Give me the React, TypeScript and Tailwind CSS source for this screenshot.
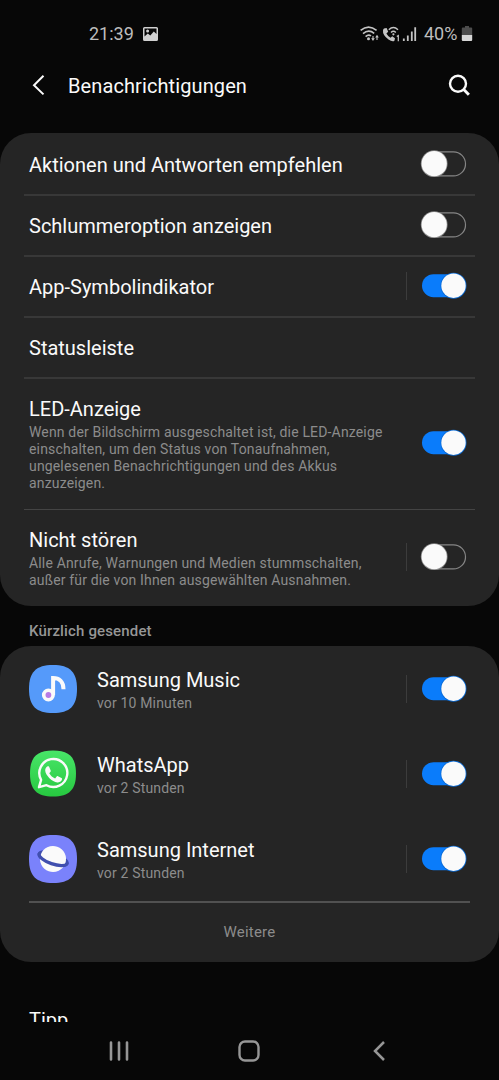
import React from "react";

function Toggle({ on, label }: { on: boolean; label: string }) {
  return (
    <button role="switch" aria-checked={on} aria-label={label} className="block h-7 w-12 shrink-0">
      <svg viewBox="0 0 48 28" className="block h-7 w-12">
        {on ? (
          <>
            <rect x="3" y="2.2" width="44" height="23" rx="11.5" fill="#0a7cfb" />
            <circle cx="34.5" cy="13.7" r="13" fill="#0a6bd6" />
            <circle cx="34.5" cy="13.7" r="12.2" fill="#fafafa" />
          </>
        ) : (
          <>
            <rect x="3.5" y="1.9" width="43" height="24" rx="12" fill="none" stroke="#858585" strokeWidth="1.2" />
            <circle cx="15.2" cy="13.7" r="13.4" fill="#8a8a8a" />
            <circle cx="15.2" cy="13.7" r="12.6" fill="#fafafa" />
          </>
        )}
      </svg>
    </button>
  );
}

function Separator() {
  return <div className="mr-3 h-7 w-px shrink-0 bg-[#3c3c3c]" />;
}

function Row({
  title,
  text,
  on,
  separated = false,
  className,
}: {
  title: string;
  text?: string[];
  on?: boolean;
  separated?: boolean;
  className: string;
}) {
  return (
    <div className={"flex items-center pr-8 pl-[29px] " + className}>
      <div className="min-w-0 flex-1 pt-0.5">
        <h2 className="text-[20px] leading-6 whitespace-nowrap text-[#fafafa]">{title}</h2>
        {text && (
          <p className="mt-[3px] text-[14px] leading-[17px] tracking-[0.16px] whitespace-nowrap text-[#8c8c8c]">
            {text.map((line) => (
              <span key={line} className="block">
                {line}
              </span>
            ))}
          </p>
        )}
      </div>
      {separated && <Separator />}
      {on !== undefined && <Toggle on={on} label={title} />}
    </div>
  );
}

function Divider() {
  return <div className="mx-6 h-0.5 bg-[#383838]" />;
}

const squircle = "M24 0C41 0 48 7 48 24S41 48 24 48 0 41 0 24 7 0 24 0Z";

function MusicIcon() {
  return (
    <svg viewBox="0 0 48 48" className="size-12">
      <path d={squircle} fill="#559afa" />
      <path d="M24.1 30V13C30 13 34.5 16.5 34.5 24.3" fill="none" stroke="#fafafa" strokeWidth="4" />
      <circle cx="19.4" cy="30" r="4.7" fill="#b77be6" stroke="#fafafa" strokeWidth="3.6" />
    </svg>
  );
}

function WhatsAppIcon() {
  return (
    <svg viewBox="0 0 48 48" className="size-12">
      <defs>
        <linearGradient id="wa" x1="0" y1="0" x2="0" y2="1">
          <stop offset="0" stopColor="#48e568" />
          <stop offset="1" stopColor="#27c840" />
        </linearGradient>
      </defs>
      <path d={squircle} transform="translate(1 .6) scale(.958)" fill="url(#wa)" />
      <path
        d="M10 37.2 12.1 29.8A14 14 0 1 1 17.5 35.2Z"
        fill="none"
        stroke="#fafafa"
        strokeWidth="2.4"
        strokeLinejoin="round"
      />
      <path
        d="M18.2 16.6c.5-.5 1.5-.6 1.9.1l1.6 3.8c.2.5.1.9-.2 1.3l-1.2 1.5c1.5 2.6 3.2 4.1 5.8 5.2l1.6-2c.3-.4.7-.5 1.2-.3l3.6 1.7c.5.3.7.6.6 1.2-.4 2.4-2.5 3.6-4.8 3.3-2.5-.4-5.6-1.9-8.1-4.5-2.2-2.3-4-4.8-4-7.3 0-1.6.7-2.9 2-4Z"
        fill="#fafafa"
      />
    </svg>
  );
}

function InternetIcon() {
  return (
    <svg viewBox="0 0 48 48" className="size-12">
      <path d={squircle} fill="#7a82fb" />
      <g transform="rotate(19 24 24)">
        <ellipse cx="24" cy="23.6" rx="14.8" ry="5" fill="none" stroke="#404fae" strokeWidth="3" />
        <circle cx="24" cy="24" r="13" fill="#fafafa" />
        <path d="M9.2 23.6C9.2 26.4 15.8 28.9 24 28.9S38.8 26.4 38.8 23.6" fill="none" stroke="#404fae" strokeWidth="3.2" strokeLinecap="round" />
      </g>
    </svg>
  );
}

function AppRow({ icon, name, time }: { icon: React.ReactNode; name: string; time: string }) {
  return (
    <div className="flex h-[85px] items-center pr-8 pl-[29px]">
      {icon}
      <div className="ml-5 min-w-0 flex-1 pt-1">
        <h3 className="text-[20px] leading-6 text-[#fafafa]">{name}</h3>
        <p className="mt-px text-[14px] leading-5 tracking-[0.16px] text-[#8c8c8c]">{time}</p>
      </div>
      <Separator />
      <Toggle on label={name} />
    </div>
  );
}

function StatusBar() {
  return (
    <div className="flex h-[66px] items-center justify-between pt-px pr-[26px] pl-[89px] text-[18px] text-[#bdbdbd]">
      <div className="flex items-center">
        <span className="w-[54px] whitespace-nowrap">21:39</span>
        <svg viewBox="0 0 15 14" className="h-3.5 w-[15px]">
          <path
            fillRule="evenodd"
            fill="#d0d0d0"
            d="M1.5 0h12Q15 0 15 1.5v11Q15 14 13.5 14h-12Q0 14 0 12.5v-11Q0 0 1.5 0ZM1.5 1.5v8L4.8 6.6 7.3 8.6 10.8 4.6 13.5 7V1.5ZM4.6 2.6a1.5 1.5 0 1 1 0 3 1.5 1.5 0 0 1 0-3Z"
          />
        </svg>
      </div>
      <div className="flex items-center">
        <svg viewBox="0 0 58 20" className="h-5 w-[58px]" fill="none" stroke="#c4c4c4">
          <path d="M.6 6.4Q8.5-.3 16.6 6.4M3 9.7Q8.6 4.8 14.2 9.4M5.6 12.6Q8.6 10 11 12" strokeWidth="1.6" />
          <circle cx="8.5" cy="14.8" r="1.5" fill="#c4c4c4" stroke="none" />
          <path d="M13 12v3M17 13v3" strokeWidth="1.1" />
          <path d="M11.2 14.2h3.6L13 17ZM15.2 13.4h3.6L17 10.8Z" fill="#c4c4c4" stroke="none" />
          <path d="M24 4.5 26.6 4 28.2 7.8 26.4 9.4Q28 12.4 30.6 13.7L32.2 12.2 35 14.2 34.4 16.8Q32.5 18.3 28.5 15.5 22.4 10.8 23 6.4 23.2 5 24 4.5Z" fill="#c4c4c4" stroke="none" />
          <path d="M28.8 5.8Q33.4 1.4 38 5.8M31 8.4Q33.4 6 35.8 8.4" strokeWidth="1.4" />
          <circle cx="33.4" cy="10.3" r="1.1" fill="#c4c4c4" stroke="none" />
          <path d="M36.8 12.6 38.3 11.6V17.2" strokeWidth="1.2" />
          <path d="M43.8 14.5V17M47.8 11.5V17M51.8 7.6V17M55.2 3.3V17" strokeWidth="1.8" />
        </svg>
        <span className="ml-[6px] w-[34px] whitespace-nowrap">40%</span>
        <svg viewBox="0 0 12 16" className="ml-[3px] h-4 w-3">
          <path d="M4 0h4v1.5h2.2q1 0 1 1V9H.8V2.5q0-1 1-1H4Z" fill="#4d4d4d" />
          <path d="M.8 9h10.4v5q0 1-1 1H1.8q-1 0-1-1Z" fill="#d6d6d6" />
        </svg>
      </div>
    </div>
  );
}

export default function App() {
  return (
    <div
      className="flex h-[1080px] w-[499px] flex-col overflow-hidden bg-[#070707]"
      style={{ fontFamily: 'Roboto, "Liberation Sans", sans-serif' }}
    >
      <StatusBar />
      <header className="flex h-10 items-center pr-7 pb-0.5 pl-8">
        <svg viewBox="0 0 14 22" className="h-[22px] w-3.5" fill="none" stroke="#fafafa" strokeWidth="2">
          <path d="M11.5 1.8 2 11.3l9.5 9.1" />
        </svg>
        <h1 className="ml-[22px] flex-1 pt-px text-[20px] leading-6 tracking-[0.1px] text-[#fafafa]">Benachrichtigungen</h1>
        <svg viewBox="0 0 24 24" className="size-6" fill="none" stroke="#fafafa" strokeWidth="2.4">
          <circle cx="11" cy="10.7" r="8" />
          <path d="m16.5 16.2 5.4 5.6" strokeWidth="2.9" />
        </svg>
      </header>

      <main className="flex h-[916px] shrink-0 flex-col overflow-hidden pt-[27px]">
        <section className="h-[473px] shrink-0 overflow-hidden rounded-[31px] bg-[#252525]">
          <Row title="Aktionen und Antworten empfehlen" on={false} className="h-[61px] pt-px" />
          <Divider />
          <Row title="Schlummeroption anzeigen" on={false} className="h-[59px] pb-px" />
          <Divider />
          <Row title="App-Symbolindikator" on separated className="h-[59px] pb-px" />
          <Divider />
          <Row title="Statusleiste" className="h-[59px] pb-px" />
          <Divider />
          <Row
            title="LED-Anzeige"
            text={[
              "Wenn der Bildschirm ausgeschaltet ist, die LED-Anzeige",
              "einschalten, um den Status von Tonaufnahmen,",
              "ungelesenen Benachrichtigungen und des Akkus",
              "anzuzeigen.",
            ]}
            on
            className="h-[130px] pb-0.5"
          />
          <div className="mx-6 h-px bg-[#444444]" />
          <Row
            title="Nicht stören"
            text={["Alle Anrufe, Warnungen und Medien stummschalten,", "außer für die von Ihnen ausgewählten Ausnahmen."]}
            on={false}
            separated
            className="h-24 pb-0.5"
          />
        </section>

        <h2 className="flex h-10 shrink-0 items-center pt-[11px] pl-[29px] text-[15px] font-medium tracking-[0.15px] text-[#969696]">
          Kürzlich gesendet
        </h2>

        <section className="h-[316px] shrink-0 overflow-hidden rounded-[31px] bg-[#252525]">
          <AppRow icon={<MusicIcon />} name="Samsung Music" time="vor 10 Minuten" />
          <AppRow icon={<WhatsAppIcon />} name="WhatsApp" time="vor 2 Stunden" />
          <AppRow icon={<InternetIcon />} name="Samsung Internet" time="vor 2 Stunden" />
          <div className="mx-[29px] h-0.5 bg-[#515151]" />
          <button className="flex h-[58px] w-full items-center justify-center text-[15px] tracking-[0.2px] text-[#8c8c8c]">
            Weitere
          </button>
        </section>

        <h2 className="shrink-0 pt-[46px] pl-[29px] text-[20px] leading-6 text-[#fafafa]">Tipp</h2>
      </main>

      <nav className="flex h-[58px] shrink-0 items-center px-[54px]">
        <button aria-label="Recents" className="flex w-[130px] justify-center">
          <svg viewBox="0 0 20 20" className="size-5" stroke="#969696" strokeWidth="2.6" strokeLinecap="round">
            <path d="M2 1.5v17M10 1.5v17M18 1.5v17" />
          </svg>
        </button>
        <button aria-label="Home" className="flex w-[130px] justify-center">
          <svg viewBox="0 0 22 22" className="size-[22px]" fill="none" stroke="#969696" strokeWidth="2.4">
            <rect x="1.5" y="1.5" width="19" height="19" rx="5.5" />
          </svg>
        </button>
        <button aria-label="Back" className="flex w-[130px] justify-center">
          <svg viewBox="0 0 12 20" className="h-5 w-3" fill="none" stroke="#969696" strokeWidth="2.5">
            <path d="M11 1 2 10l9 9" />
          </svg>
        </button>
      </nav>
    </div>
  );
}
